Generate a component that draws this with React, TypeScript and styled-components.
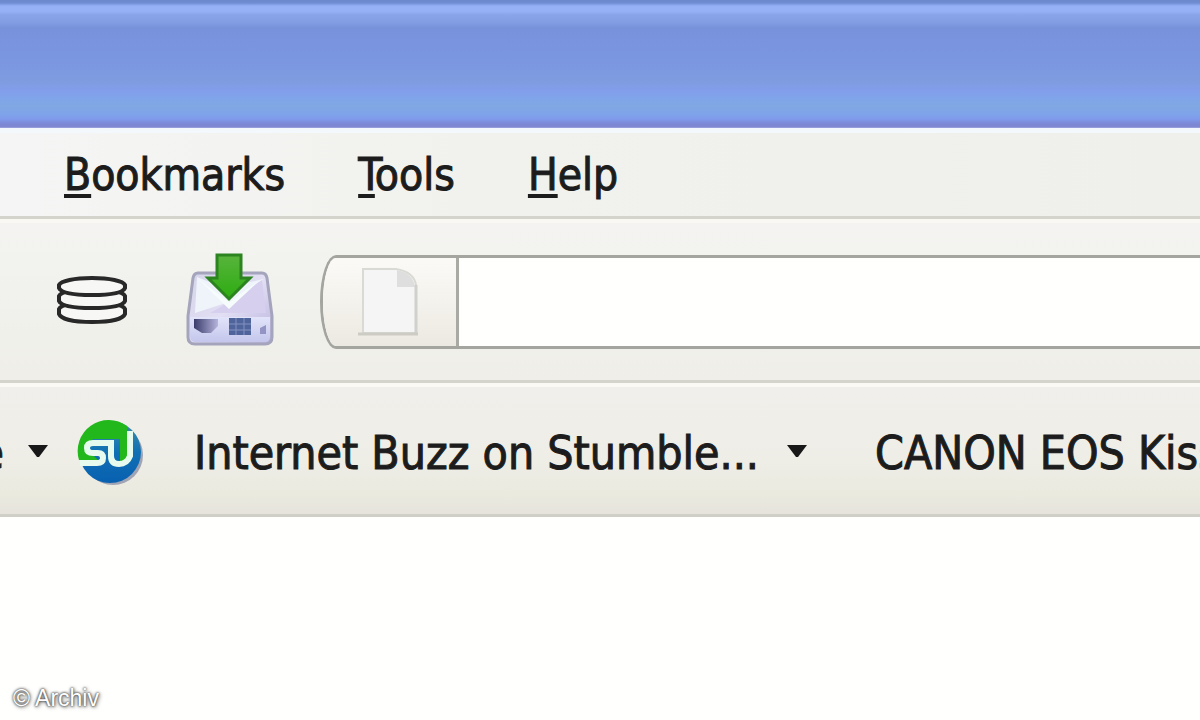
import React from "react";
import styled, { createGlobalStyle } from "styled-components";

const GlobalStyle = createGlobalStyle`
  *, *::before, *::after { box-sizing: border-box; }
  html, body, #root { min-height: 100vh; }
  body {
    margin: 0;
    background: #fffffe;
    color: #1c1c1c;
    font-family: "DejaVu Sans Condensed", "DejaVu Sans", sans-serif;
    overflow-x: hidden;
  }
  #root { display: flex; flex-direction: column; }
  svg { flex: none; }
`;

const Window = styled.div`
  display: flex;
  flex: 1;
  flex-direction: column;
  overflow: hidden;
`;

const TitleBar = styled.header`
  flex: none;
  height: 128px;
  background: linear-gradient(
    to bottom,
    #6c88cc 0,
    #6f8cd2 3px,
    #96b0f6 6px,
    #98b2f8 11px,
    #8aa4ea 15px,
    #849ee4 22px,
    #7892da 28px,
    #7a94e0 44px,
    #7c98e0 68px,
    #7f9ce0 82px,
    #829eec 90px,
    #80a4ea 98px,
    #80a8e2 106px,
    #7fa4ea 114px,
    #809aec 119px,
    #7c88d4 124px,
    #8088d0 127px,
    #a8b4e4 128px
  );
`;

const Bar = styled.div`
  display: flex;
  flex: none;
  align-items: center;
  overflow: hidden;
  border-bottom: 3px solid #d4d4cc;
`;

const MenuBar = styled(Bar).attrs({ as: "nav" })`
  height: 91px;
  gap: 73px;
  padding: 0 64px;
  border-top: 5px solid #f2f8fc;
  background: linear-gradient(to right, #f5f5f5, #f1f2ed 40%, #eff0eb);
`;

const ToolBar = styled(Bar)`
  height: 164px;
  padding-left: 56px;
  border-top: 4px solid #faf8f3;
  background: linear-gradient(to bottom, #f4f3f1, #f1f2ee 40%, #efeee8);
`;

const BookmarkBar = styled(Bar)`
  height: 134px;
  padding-top: 4px;
  border-top: 4px solid #fbf9f3;
  border-bottom-color: #cfcfc8;
  background: linear-gradient(to bottom, #f0efeb, #eeede6 60%, #ebeadf 85%, #e5e3dc);
`;

const PlainButton = styled.button`
  display: flex;
  flex: none;
  align-items: center;
  margin: 0;
  padding: 0;
  border: 0;
  background: none;
  color: inherit;
  font: inherit;
`;

const TextButton = styled(PlainButton)<{ $size?: number }>`
  font-size: ${({ $size = 46 }) => $size}px;
  line-height: 56px;
  white-space: nowrap;
  -webkit-text-stroke: 1px currentColor;
`;

const AccessKey = styled.span`
  text-decoration: underline;
  text-decoration-thickness: 4px;
  text-underline-offset: 4px;
  text-decoration-skip-ink: none;
`;

const CacheButton = styled(PlainButton)`
  padding-bottom: 4px;
`;

const DownloadButton = styled(PlainButton)`
  margin: 0 46px 0 58px;
  padding-bottom: 4px;
`;

const AddressBar = styled.div`
  display: flex;
  flex: 1;
  height: 94px;
  overflow: hidden;
  border: 3px solid #a5a59f;
  border-right: 0;
  border-radius: 16px 0 0 16px / 47px 0 0 47px;
  background: #fffffe;
`;

const SiteButton = styled(PlainButton)`
  width: 136px;
  justify-content: center;
  border-right: 3px solid #aaaaa4;
  background: linear-gradient(to bottom, #fbfaf7, #f4f2ec 50%, #ece9e2);
`;

const AddressInput = styled.input`
  flex: 1;
  min-width: 0;
  padding: 0 16px;
  border: 0;
  outline: 0;
  background: transparent;
  font: inherit;
  font-size: 44px;
`;

const ClippedBookmark = styled(TextButton)`
  width: 48px;
  justify-content: flex-end;
  gap: 24px;
  overflow: hidden;
`;

const FeedBookmark = styled(TextButton)`
  margin-left: 28px;
`;

const FeedTitle = styled.span`
  margin: 0 28px 0 48px;
`;

const PageBookmark = styled(TextButton)`
  margin-left: 68px;
`;

const Page = styled.main`
  display: flex;
  flex: 1;
  align-items: flex-end;
  padding: 8px 13px;
`;

const Credit = styled.small`
  color: #ffffff;
  font-family: "Liberation Sans", Arial, sans-serif;
  font-size: 23px;
  line-height: 28px;
  text-shadow: 0 0 2px #404040, 0 0 3px #606060, 1px 1px 4px #707070;
`;

const Caret = () => (
  <svg width="20" height="18" viewBox="0 0 20 18" aria-hidden="true">
    <path d="M0 1H20L11 13H9Z" fill="#181818" />
  </svg>
);

const DiscsIcon = () => (
  <svg width="72" height="50" viewBox="0 0 72 50" aria-hidden="true">
    <g fill="#f7f7f5" stroke="#282828" strokeWidth="4">
      <path d="M3 34C5 29 18 28 36 28S67 29 69 34V39C67 44 54 47 36 47S5 44 3 39Z" />
      <path d="M3 21C5 16 18 15 36 15S67 16 69 21V26C67 31 54 33 36 33S5 31 3 26Z" />
      <path d="M3 10C5 6 18 3 36 3S67 6 69 10V13C67 18 54 20 36 20S5 18 3 13Z" />
    </g>
  </svg>
);

const DownloadIcon = () => (
  <svg width="88" height="94" viewBox="0 0 88 94" aria-hidden="true">
    <defs>
      <linearGradient id="driveTop" x1="0" y1="0" x2="1" y2="1">
        <stop offset="0" stopColor="#d4d4e8" />
        <stop offset="0.5" stopColor="#e2def4" />
        <stop offset="1" stopColor="#b8b0dc" />
      </linearGradient>
      <linearGradient id="driveFront" x1="0" y1="0" x2="0" y2="1">
        <stop offset="0" stopColor="#e2e4fa" />
        <stop offset="1" stopColor="#c4c6ec" />
      </linearGradient>
      <linearGradient id="arrow" x1="0" y1="0" x2="0" y2="1">
        <stop offset="0" stopColor="#58b43c" />
        <stop offset="1" stopColor="#2cac10" />
      </linearGradient>
      <linearGradient id="slot" x1="0" y1="0" x2="1" y2="0">
        <stop offset="0" stopColor="#3c3c6c" />
        <stop offset="1" stopColor="#b4b4dc" />
      </linearGradient>
    </defs>
    <path
      d="M12 20H76Q80 20 81 25L86 63V84Q86 91 79 91H9Q2 91 2 84V63L7 25Q8 20 12 20Z"
      fill="url(#driveTop)"
      stroke="#a4a4bc"
      strokeWidth="3"
    />
    <path d="M11 24L9 60L43 49L78 26L60 30H26Z" fill="#eef4fa" />
    <path d="M43 49L76 27L80 60H24Z" fill="#d6d0ee" />
    <path d="M12 26L43 49L74 27L43 56Z" fill="#f6fcfc" />
    <path d="M4 64H84V83Q84 89 78 89H10Q4 89 4 83Z" fill="url(#driveFront)" />
    <path d="M8 66H32V73L25 80H16L8 75Z" fill="url(#slot)" />
    <rect x="43" y="65" width="22" height="17" fill="#50649c" />
    <path d="M50 65V82M58 65V82M43 71H65M43 77H65" stroke="#8090c0" strokeWidth="1" />
    <path d="M74 81V75L80 72V81Z" fill="#9494c4" />
    <path
      d="M31 2H55V25H64L43 46L22 25H31Z"
      fill="url(#arrow)"
      stroke="#2c8420"
      strokeWidth="3"
    />
  </svg>
);

const DocumentIcon = () => (
  <svg width="64" height="76" viewBox="0 0 64 76" aria-hidden="true">
    <path d="M5 5H38Q56 8 58 21V69H5Z" fill="#f5f5f6" stroke="#dadad4" strokeWidth="2" />
    <path d="M39 6Q55 9 57 23H39Z" fill="#dededf" />
    <path d="M58 21V69" stroke="#d0d0cc" strokeWidth="3" />
    <path d="M0 70H60" stroke="#ccccc4" strokeWidth="3" />
  </svg>
);

const StumbleIcon = () => (
  <svg width="70" height="70" viewBox="0 0 70 70" aria-hidden="true">
    <defs>
      <linearGradient id="globe" x1="0" y1="0" x2="0" y2="1">
        <stop offset="0" stopColor="#4090a8" />
        <stop offset="0.5" stopColor="#1070b4" />
        <stop offset="1" stopColor="#0860b0" />
      </linearGradient>
    </defs>
    <circle cx="37" cy="37" r="30" fill="#a0a4b4" />
    <circle cx="34" cy="34" r="31" fill="url(#globe)" />
    <path d="M3 42A31 31 0 0 1 51 8V43H44V21H17L9 29L22 42Z" fill="#22b81c" />
    <path
      d="M34 25H17Q11 25 11 30T17 35H22Q27 35 27 40T21 45H4"
      fill="none"
      stroke="#e6fbee"
      strokeWidth="6"
    />
    <path
      d="M35 22V38Q35 46 43 46T54 38V13"
      fill="none"
      stroke="#e6fbee"
      strokeWidth="6"
    />
  </svg>
);

const menus = ["Bookmarks", "Tools", "Help"];

export default function App() {
  return (
    <>
      <GlobalStyle />
      <Window>
        <TitleBar />
        <MenuBar>
          {menus.map((name) => (
            <TextButton key={name} type="button" $size={44}>
              <span>
                <AccessKey>{name[0]}</AccessKey>
                {name.slice(1)}
              </span>
            </TextButton>
          ))}
        </MenuBar>
        <ToolBar>
          <CacheButton type="button" aria-label="Cache">
            <DiscsIcon />
          </CacheButton>
          <DownloadButton type="button" aria-label="Downloads">
            <DownloadIcon />
          </DownloadButton>
          <AddressBar>
            <SiteButton type="button" aria-label="Site information">
              <DocumentIcon />
            </SiteButton>
            <AddressInput type="text" aria-label="Address" />
          </AddressBar>
        </ToolBar>
        <BookmarkBar>
          <ClippedBookmark type="button">
            <span>e</span>
            <Caret />
          </ClippedBookmark>
          <FeedBookmark type="button">
            <StumbleIcon />
            <FeedTitle>Internet Buzz on Stumble...</FeedTitle>
            <Caret />
          </FeedBookmark>
          <PageBookmark type="button">CANON EOS Kiss</PageBookmark>
        </BookmarkBar>
        <Page>
          <Credit>© Archiv</Credit>
        </Page>
      </Window>
    </>
  );
}
